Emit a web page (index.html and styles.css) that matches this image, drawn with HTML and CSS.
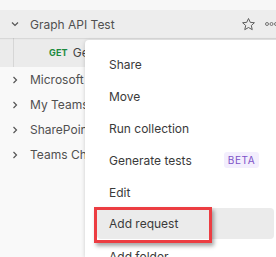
FILE: index.html
```html
<!DOCTYPE html>
<html>
<head>
<meta charset="utf-8">
<link rel="stylesheet" href="styles.css">
</head>
<body>
<div class="sidebar">
  <div class="topstrip"></div>
  <div class="row row-open">
    <svg class="chev" width="8" height="6" viewBox="0 0 8 6"><path d="M1 1.5 L4 4.5 L7 1.5" fill="none" stroke="#555" stroke-width="1.2"/></svg>
    <span class="name">Graph API Test</span>
    <svg class="star" width="15" height="15" viewBox="0 0 16 16"><path d="M8 1.6 L9.9 5.7 L14.3 6.1 L11 9.1 L12 13.5 L8 11.2 L4 13.5 L5 9.1 L1.7 6.1 L6.1 5.7 Z" fill="none" stroke="#555" stroke-width="1"/></svg>
    <svg class="dots" width="14" height="6" viewBox="0 0 14 6"><circle cx="2" cy="3" r="1.5" fill="none" stroke="#666" stroke-width="0.9"/><circle cx="6.5" cy="3" r="1.5" fill="none" stroke="#666" stroke-width="0.9"/><circle cx="11" cy="3" r="1.5" fill="none" stroke="#666" stroke-width="0.9"/></svg>
  </div>
  <div class="row row-req">
    <span class="guide"></span>
    <span class="method">GET</span>
    <span class="name">Get user</span>
  </div>
  <div class="row row-col">
    <svg class="chev" width="6" height="8" viewBox="0 0 6 8"><path d="M1.5 1 L4.5 4 L1.5 7" fill="none" stroke="#555" stroke-width="1.2"/></svg>
    <span class="name">Microsoft Graph</span>
  </div>
  <div class="row row-col">
    <svg class="chev" width="6" height="8" viewBox="0 0 6 8"><path d="M1.5 1 L4.5 4 L1.5 7" fill="none" stroke="#555" stroke-width="1.2"/></svg>
    <span class="name">My Teams App</span>
  </div>
  <div class="row row-col">
    <svg class="chev" width="6" height="8" viewBox="0 0 6 8"><path d="M1.5 1 L4.5 4 L1.5 7" fill="none" stroke="#555" stroke-width="1.2"/></svg>
    <span class="name">SharePoint</span>
  </div>
  <div class="row row-col">
    <svg class="chev" width="6" height="8" viewBox="0 0 6 8"><path d="M1.5 1 L4.5 4 L1.5 7" fill="none" stroke="#555" stroke-width="1.2"/></svg>
    <span class="name">Teams Chat</span>
  </div>
</div>

<div class="menu">
  <div class="item">Share</div>
  <div class="item">Move</div>
  <div class="item">Run collection</div>
  <div class="item">Generate tests <span class="beta">BETA</span></div>
  <div class="item">Edit</div>
  <div class="item item-hover">Add request</div>
  <div class="item">Add folder</div>
</div>

<div class="callout"></div>
</body>
</html>
```

FILE: styles.css
```css
html, body {
  margin: 0;
  padding: 0;
}
body {
  width: 276px;
  height: 257px;
  overflow: hidden;
  background: #f9f9f9;
  font-family: Inter, "Noto Sans", sans-serif;
  position: relative;
}
.sidebar {
  display: flex;
  flex-direction: column;
}
.topstrip {
  height: 10px;
  background: #f7f7f7;
}
.row {
  display: flex;
  align-items: center;
  height: 25px;
  font-size: 12px;
  color: #505050;
  white-space: nowrap;
  overflow: hidden;
  flex: none;
}
.row-open {
  height: 28px;
  background: #ededed;
  box-shadow: 0 1px 1px rgba(0,0,0,0.08);
  position: relative;
  z-index: 1;
  overflow: visible;
}
.row-req {
  height: 29px;
  background: #ebebeb;
}
.chev {
  margin-left: 11px;
  width: 8px;
  flex: none;
}
.row-col .chev {
  margin-left: 12px;
  width: 6px;
  margin-right: 1px;
}
.row .name {
  margin-left: 11px;
}
.row-open .name {
  flex: 1;
}
.star {
  margin-right: 9px;
  flex: none;
}
.dots {
  flex: none;
  margin-right: -3px;
}
.guide {
  align-self: stretch;
  width: 1px;
  margin-left: 13px;
  background: #d6d6d6;
}
.method {
  margin-left: 35px;
  font-size: 9px;
  font-weight: 700;
  color: #1b8a3f;
  letter-spacing: 0.2px;
}
.row-req .name {
  margin-left: 5px;
  color: #444;
}

.menu {
  position: absolute;
  left: 85px;
  top: 40px;
  width: 201px;
  height: 217px;
  overflow: hidden;
  background: #fff;
  border-radius: 4px 4px 0 0;
  box-shadow: 0 1px 4px rgba(0,0,0,0.18);
  padding-top: 8px;
  box-sizing: border-box;
  z-index: 2;
  display: flex;
  flex-direction: column;
}
.item {
  height: 32px;
  margin: 0 12px;
  padding-left: 12px;
  display: flex;
  align-items: center;
  font-size: 12px;
  color: #3a3a3a;
  border-radius: 4px;
  white-space: nowrap;
  flex: none;
}
.item-hover {
  background: #ebebeb;
  height: 31px;
  margin-bottom: 1px;
}
.beta {
  margin-left: 32px;
  font-size: 10px;
  letter-spacing: 0.6px;
  color: #7d52c8;
  background: #f3eefd;
  border-radius: 3px;
  padding: 2px 4px;
}
.callout {
  position: absolute;
  left: 94px;
  top: 207px;
  width: 118px;
  height: 36px;
  box-sizing: border-box;
  border: 3px solid #ec3d42;
  box-shadow: 2px 3px 4px rgba(0,0,0,0.35);
  z-index: 3;
}
```
